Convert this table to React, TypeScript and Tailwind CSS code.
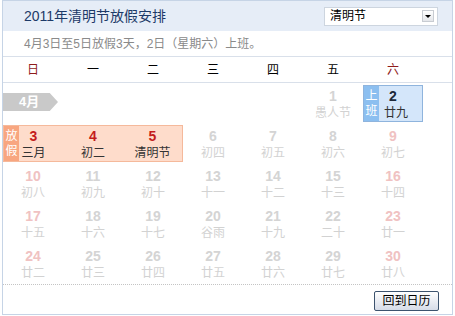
import React from "react";

type Day = { d: number; lunar: string; weekend?: boolean };

const rows: Day[][] = [
  [
    { d: 3, lunar: "三月", weekend: true },
    { d: 4, lunar: "初二" },
    { d: 5, lunar: "清明节" },
    { d: 6, lunar: "初四" },
    { d: 7, lunar: "初五" },
    { d: 8, lunar: "初六" },
    { d: 9, lunar: "初七", weekend: true },
  ],
  [
    { d: 10, lunar: "初八", weekend: true },
    { d: 11, lunar: "初九" },
    { d: 12, lunar: "初十" },
    { d: 13, lunar: "十一" },
    { d: 14, lunar: "十二" },
    { d: 15, lunar: "十三" },
    { d: 16, lunar: "十四", weekend: true },
  ],
  [
    { d: 17, lunar: "十五", weekend: true },
    { d: 18, lunar: "十六" },
    { d: 19, lunar: "十七" },
    { d: 20, lunar: "谷雨" },
    { d: 21, lunar: "十九" },
    { d: 22, lunar: "二十" },
    { d: 23, lunar: "廿一", weekend: true },
  ],
  [
    { d: 24, lunar: "廿二", weekend: true },
    { d: 25, lunar: "廿三" },
    { d: 26, lunar: "廿四" },
    { d: 27, lunar: "廿五" },
    { d: 28, lunar: "廿六" },
    { d: 29, lunar: "廿七" },
    { d: 30, lunar: "廿八", weekend: true },
  ],
];

const weekdays = ["日", "一", "二", "三", "四", "五", "六"];

function FadedCell({ day }: { day: Day }) {
  return (
    <div className="flex flex-col items-center pt-[2px]">
      <span
        className={`text-[14px] font-bold leading-[18px] ${
          day.weekend ? "text-[#f0c2c2]" : "text-[#d4d4d4]"
        }`}
      >
        {day.d}
      </span>
      <span className="text-[12px] leading-[16px] text-[#d2d2d2]">{day.lunar}</span>
    </div>
  );
}

function HolidayCell({ day, idx }: { day: Day; idx: number }) {
  return (
    <div
      className={`relative flex flex-col items-center pt-[1px] bg-[#fedccb] border-y border-[#f5b99b] ${
        idx === 0 ? "border-l" : ""
      } ${idx === 2 ? "border-r" : ""}`}
    >
      {idx === 0 && (
        <div className="absolute left-0 top-0 bottom-0 w-[15px] bg-[#f8a680] text-white text-[12px] leading-[15px] flex flex-col items-center justify-center">
          <span>放</span>
          <span>假</span>
        </div>
      )}
      <span className="text-[14px] font-bold leading-[18px] text-[#c41c1c]">{day.d}</span>
      <span className="text-[12px] leading-[16px] text-[#333]">{day.lunar}</span>
    </div>
  );
}

export default function App() {
  return (
    <div
      className="w-[455px] h-[316px] bg-white"
      style={{ fontFamily: '"Liberation Sans", "Noto Sans CJK SC", sans-serif' }}
    >
      <div className="ml-[2px] w-[451px] h-[315px] border border-[#c6d4e6] flex flex-col">
        {/* header */}
        <div className="h-[30px] bg-[#e6edf7] flex items-center justify-between pl-[21px] pr-[14px]">
          <span className="text-[14px] text-[#1d3a68]">2011年清明节放假安排</span>
          <div className="w-[114px] h-[19px] bg-white border border-[#cdd5df] flex items-center justify-between pl-[5px] pr-[3px]">
            <span className="text-[12px] text-black leading-none">清明节</span>
            <div className="w-[12px] h-[12px] border border-[#c8ccd2] bg-gradient-to-b from-white to-[#e4e6ea] flex items-center justify-center">
              <div className="w-0 h-0 border-l-[3px] border-r-[3px] border-t-[3px] border-l-transparent border-r-transparent border-t-black" />
            </div>
          </div>
        </div>

        {/* subtitle */}
        <div className="h-[26px] border-b border-[#d9e0ea] flex items-center pl-[21px] text-[12px] text-[#8a8a8a]">
          4月3日至5日放假3天，2日（星期六）上班。
        </div>

        {/* weekday header */}
        <div className="h-[26px] border-b border-[#d9e0ea] grid grid-cols-[repeat(7,60px)] items-center">
          {weekdays.map((w, i) => (
            <span
              key={w}
              className={`text-center text-[12px] ${
                i === 0 || i === 6 ? "text-[#8e1c1c]" : "text-black"
              }`}
            >
              {w}
            </span>
          ))}
        </div>

        {/* days */}
        <div className="pt-[2px] flex flex-col gap-[3px]">
          <div className="h-[37px] grid grid-cols-[repeat(7,60px)]">
            <div className="col-span-5 pt-[8px]">
              <div className="w-[55px] h-[18px] bg-[#c9c9c9] [clip-path:polygon(0_0,85%_0,100%_50%,85%_100%,0_100%)] flex items-center pl-[16px] text-white text-[13px] font-bold">
                4月
              </div>
            </div>
            <FadedCell day={{ d: 1, lunar: "愚人节" }} />
            <div className="relative flex flex-col items-center pt-[1px] bg-[#d4e6fa] border border-[#8fb4dd]">
              <div className="absolute left-0 top-0 bottom-0 w-[15px] bg-[#8cbff0] text-white text-[12px] leading-[15px] flex flex-col items-center justify-center">
                <span>上</span>
                <span>班</span>
              </div>
              <span className="text-[14px] font-bold leading-[18px] text-[#1b2838]">2</span>
              <span className="text-[12px] leading-[16px] text-[#333] pl-[6px]">廿九</span>
            </div>
          </div>
          {rows.map((row, ri) => (
            <div key={ri} className="h-[37px] grid grid-cols-[repeat(7,60px)]">
              {row.map((day, di) =>
                ri === 0 && di < 3 ? (
                  <HolidayCell key={day.d} day={day} idx={di} />
                ) : (
                  <FadedCell key={day.d} day={day} />
                )
              )}
            </div>
          ))}
        </div>

        {/* footer */}
        <div className="mt-[2px] border-t border-dotted border-[#c4c4c4] flex-1 flex justify-end items-start pt-[6px] pr-[13px]">
          <button className="w-[65px] h-[20px] border border-[#3c536e] rounded-[2px] bg-gradient-to-b from-white to-[#d6dce8] text-[12px] text-black leading-none">
            回到日历
          </button>
        </div>
      </div>
    </div>
  );
}
